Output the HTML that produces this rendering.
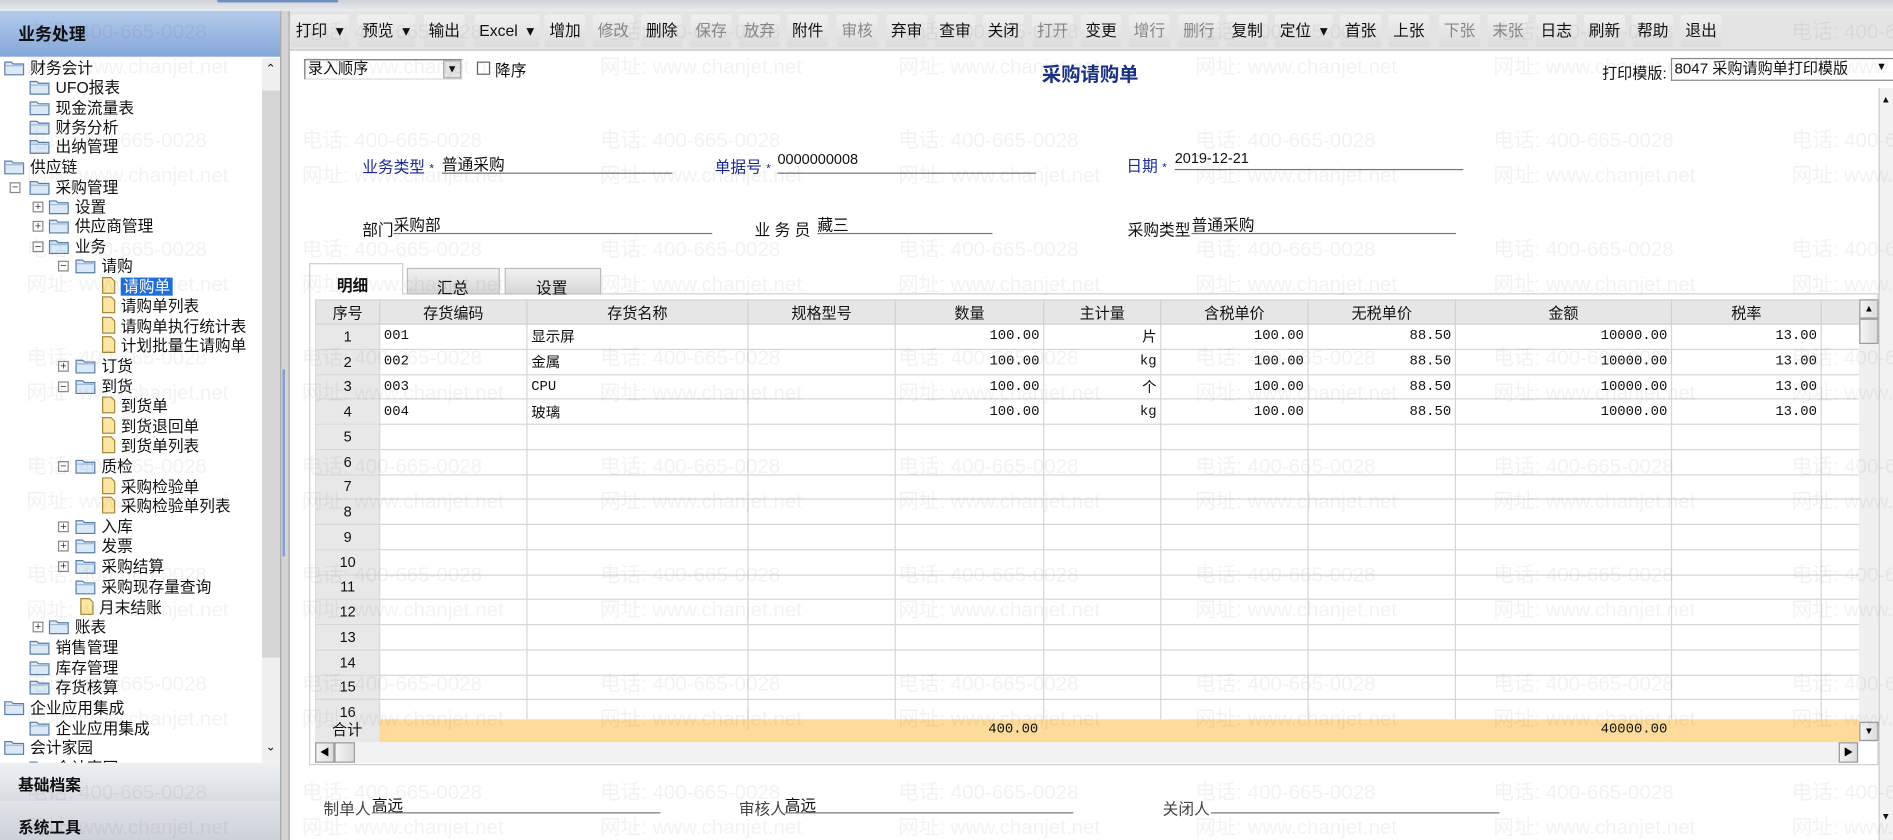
<!DOCTYPE html>
<html><head><meta charset="utf-8">
<style>
*{margin:0;padding:0;box-sizing:border-box}
html,body{width:1893px;height:840px;overflow:hidden;background:#fff}
body{font-family:"Liberation Sans","Noto Sans CJK SC",sans-serif;font-size:13px;color:#111}
#w{position:absolute;left:0;top:0;width:1568px;height:696px;transform:scale(1.2073,1.2069);transform-origin:0 0;overflow:hidden;background:#fff}
.a{position:absolute;white-space:nowrap}
.tb{position:absolute;top:12px;height:27px;line-height:27px;background:linear-gradient(#f0f0f0,#dcdcdc);border-radius:2px;padding:0 4px;font-size:13px}
.g{color:#888}
.ti{position:absolute;height:17px;line-height:17px;font-size:13px;white-space:nowrap}
.ti svg{vertical-align:-2px;margin-right:4px}
.box{position:absolute;width:9px;height:9px;border:1px solid #888;background:#fff;font-size:9px;line-height:7px;text-align:center;color:#333}
.wm{position:absolute;color:rgba(0,0,0,0.05);font-size:17px;white-space:nowrap;font-family:"Liberation Sans","Noto Sans CJK SC",sans-serif}
table{border-collapse:collapse;table-layout:fixed}
td{border:1px solid #d6d6d6;height:20.75px;font-size:12px;padding:0 3px;white-space:nowrap;overflow:hidden}
th{background:#e6e6e6;border:1px solid #d0d0d0;font-weight:normal;height:20px;font-size:12.5px}
td.n{background:#e8e8e8;text-align:center}
td.r{text-align:right;font-family:"Liberation Mono","Noto Sans CJK SC",monospace;font-size:11.5px}
td.m{font-family:"Liberation Mono","Noto Sans CJK SC",monospace;font-size:11.5px}
.ln{position:absolute;height:1px;background:#777}
.lbl{position:absolute;font-size:13px;white-space:nowrap}
.sb{position:absolute;background:linear-gradient(90deg,#f4f4f4,#dcdcdc);border:1px solid #999;font-size:8px;text-align:center;color:#000}
</style></head><body>
<div id="w">
<div class="a" style="left:0;top:0;width:1568px;height:9px;background:linear-gradient(#cfd3d8,#e9ebee)"></div>
<div class="a" style="left:180px;top:0;width:100px;height:2px;background:#6f8fc0"></div>
<div class="a" style="left:0;top:9px;width:232px;height:38px;background:linear-gradient(#b4cbec,#84a7d8)"></div>
<div class="a" style="left:15px;top:18px;font-size:14px;font-weight:bold">业务处理</div>
<div class="a" style="left:217px;top:48px;width:15px;height:584px;background:#f0f0f0"></div>
<div class="a" style="left:217px;top:75px;width:15px;height:470px;background:#d6d6d6"></div>
<div class="a" style="left:220px;top:52px;font-size:10px">&#8963;</div>
<div class="a" style="left:220px;top:614px;font-size:10px">&#8964;</div>
<div id="tree" class="a" style="left:0;top:0;width:217px;height:632px;overflow:hidden"></div>
<div class="a" style="left:0;top:632px;width:232px;height:32px;background:linear-gradient(#eef0f3,#d8dce2)"></div>
<div class="a" style="left:15px;top:640px;font-size:13px;font-weight:bold">基础档案</div>
<div class="a" style="left:0;top:664px;width:232px;height:32px;background:linear-gradient(#e0e3e8,#cdd2d9)"></div>
<div class="a" style="left:15px;top:675px;font-size:13px;font-weight:bold">系统工具</div>
<div class="a" style="left:232px;top:9px;width:8px;height:687px;background:#d4d4d4;border-left:1px solid #aaa;border-right:1px solid #aaa"></div>
<div class="a" style="left:234px;top:306px;width:2px;height:155px;background:#7f9fd6"></div>
<div class="a" style="left:240px;top:9px;width:1328px;height:33px;background:#e4e4e4;border-bottom:1px solid #c8c8c8"></div>
<div class="tb" style="left:241px">打印 &nbsp;▾</div>
<div class="tb" style="left:296px">预览 &nbsp;▾</div>
<div class="tb" style="left:351px">输出</div>
<div class="tb" style="left:393px">Excel &nbsp;▾</div>
<div class="tb" style="left:451px">增加</div>
<div class="tb g" style="left:491px">修改</div>
<div class="tb" style="left:531px">删除</div>
<div class="tb g" style="left:572px">保存</div>
<div class="tb g" style="left:612px">放弃</div>
<div class="tb" style="left:652px">附件</div>
<div class="tb g" style="left:693px">审核</div>
<div class="tb" style="left:734px">弃审</div>
<div class="tb" style="left:774px">查审</div>
<div class="tb" style="left:814px">关闭</div>
<div class="tb g" style="left:855px">打开</div>
<div class="tb" style="left:895px">变更</div>
<div class="tb g" style="left:935px">增行</div>
<div class="tb g" style="left:976px">删行</div>
<div class="tb" style="left:1016px">复制</div>
<div class="tb" style="left:1056px">定位 &nbsp;▾</div>
<div class="tb" style="left:1110px">首张</div>
<div class="tb" style="left:1150px">上张</div>
<div class="tb g" style="left:1192px">下张</div>
<div class="tb g" style="left:1232px">末张</div>
<div class="tb" style="left:1272px">日志</div>
<div class="tb" style="left:1312px">刷新</div>
<div class="tb" style="left:1352px">帮助</div>
<div class="tb" style="left:1392px">退出</div>
<div class="a" style="left:252px;top:49px;width:131px;height:17px;border:1px solid #777;border-right-color:#ddd;border-bottom-color:#ddd;font-size:12.5px;line-height:15px;padding-left:2px">录入顺序</div>
<div class="a" style="left:367px;top:50px;width:15px;height:15px;background:#e4e4e4;border:1px solid #aaa;font-size:9px;text-align:center;line-height:13px">▼</div>
<div class="a" style="left:395px;top:51px;width:11px;height:11px;border:1px solid #666;background:#fff"></div>
<div class="a" style="left:410px;top:48px;font-size:13px">降序</div>
<div class="a" style="left:863px;top:48px;font-size:16px;font-weight:bold;color:#1a3080">采购请购单</div>
<div class="a" style="left:1327px;top:50px;font-size:12.5px">打印模版:</div>
<div class="a" style="left:1384px;top:48px;width:184px;height:19px;border:1px solid #888;border-right:0;font-size:12.5px;line-height:17px;padding-left:2px">8047 采购请购单打印模版</div>
<div class="a" style="left:1554px;top:50px;font-size:9px">▼</div>
<div class="a" style="left:1556px;top:73px;width:12px;height:623px;background:#f2f2f2;border-left:1px solid #ccc"></div>
<div class="a" style="left:1558px;top:78px;font-size:8px">▲</div>
<div class="a" style="left:1558px;top:672px;font-size:8px">▼</div>
<div class="lbl" style="left:300px;top:128px;color:#1a2a90">业务类型 <span style="font-size:10px">*</span></div>
<div class="lbl" style="left:366px;top:126px">普通采购</div>
<div class="ln" style="left:366px;top:143px;width:191px"></div>
<div class="lbl" style="left:592px;top:128px;color:#1a2a90">单据号 <span style="font-size:10px">*</span></div>
<div class="lbl" style="left:644px;top:125px;font-size:12px">0000000008</div>
<div class="ln" style="left:644px;top:143px;width:214px"></div>
<div class="lbl" style="left:933px;top:127px;color:#1a2a90">日期 <span style="font-size:10px">*</span></div>
<div class="lbl" style="left:973px;top:124px;font-size:12px">2019-12-21</div>
<div class="ln" style="left:973px;top:140px;width:239px"></div>
<div class="lbl" style="left:300px;top:180px">部门</div>
<div class="lbl" style="left:326px;top:176px">采购部</div>
<div class="ln" style="left:326px;top:193px;width:264px"></div>
<div class="lbl" style="left:625px;top:180px">业 务 员</div>
<div class="lbl" style="left:677px;top:176px">藏三</div>
<div class="ln" style="left:677px;top:193px;width:145px"></div>
<div class="lbl" style="left:934px;top:180px">采购类型</div>
<div class="lbl" style="left:987px;top:176px">普通采购</div>
<div class="ln" style="left:987px;top:193px;width:219px"></div>
<div class="a" style="left:256px;top:243px;width:1300px;height:391px;border:1px solid #cfcfcf;background:#fff"></div>
<div class="a" style="left:256px;top:218px;width:78px;height:26px;background:#fff;border:1px solid #ccc;border-bottom:0;font-weight:bold;font-size:13px;padding:7px 0 0 22px">明细</div>
<div class="a" style="left:337px;top:222px;width:77px;height:22px;background:linear-gradient(#f2f2f2,#d6d6d6);border:1px solid #bbb;font-size:13px;padding:5px 0 0 24px">汇总</div>
<div class="a" style="left:418px;top:222px;width:80px;height:22px;background:linear-gradient(#f2f2f2,#d6d6d6);border:1px solid #bbb;font-size:13px;padding:5px 0 0 25px">设置</div>
<div class="a" style="left:261px;top:248px;width:1279px;height:348px;overflow:hidden">
<table style="width:1279px">
<colgroup><col style="width:53px"><col style="width:122px"><col style="width:183px"><col style="width:122px"><col style="width:123px"><col style="width:97px"><col style="width:122px"><col style="width:122px"><col style="width:179px"><col style="width:124px"><col style="width:32px"></colgroup>
<tr><th>序号</th><th>存货编码</th><th>存货名称</th><th>规格型号</th><th>数量</th><th>主计量</th><th>含税单价</th><th>无税单价</th><th>金额</th><th>税率</th><th></th></tr>
<tr><td class="n">1</td><td class="m">001</td><td>显示屏</td><td></td><td class="r">100.00</td><td style="text-align:right">片</td><td class="r">100.00</td><td class="r">88.50</td><td class="r">10000.00</td><td class="r">13.00</td><td></td></tr>
<tr><td class="n">2</td><td class="m">002</td><td>金属</td><td></td><td class="r">100.00</td><td class="r">kg</td><td class="r">100.00</td><td class="r">88.50</td><td class="r">10000.00</td><td class="r">13.00</td><td></td></tr>
<tr><td class="n">3</td><td class="m">003</td><td class="m">CPU</td><td></td><td class="r">100.00</td><td style="text-align:right">个</td><td class="r">100.00</td><td class="r">88.50</td><td class="r">10000.00</td><td class="r">13.00</td><td></td></tr>
<tr><td class="n">4</td><td class="m">004</td><td>玻璃</td><td></td><td class="r">100.00</td><td class="r">kg</td><td class="r">100.00</td><td class="r">88.50</td><td class="r">10000.00</td><td class="r">13.00</td><td></td></tr>
<tr><td class="n">5</td><td></td><td></td><td></td><td></td><td></td><td></td><td></td><td></td><td></td><td></td></tr>
<tr><td class="n">6</td><td></td><td></td><td></td><td></td><td></td><td></td><td></td><td></td><td></td><td></td></tr>
<tr><td class="n">7</td><td></td><td></td><td></td><td></td><td></td><td></td><td></td><td></td><td></td><td></td></tr>
<tr><td class="n">8</td><td></td><td></td><td></td><td></td><td></td><td></td><td></td><td></td><td></td><td></td></tr>
<tr><td class="n">9</td><td></td><td></td><td></td><td></td><td></td><td></td><td></td><td></td><td></td><td></td></tr>
<tr><td class="n">10</td><td></td><td></td><td></td><td></td><td></td><td></td><td></td><td></td><td></td><td></td></tr>
<tr><td class="n">11</td><td></td><td></td><td></td><td></td><td></td><td></td><td></td><td></td><td></td><td></td></tr>
<tr><td class="n">12</td><td></td><td></td><td></td><td></td><td></td><td></td><td></td><td></td><td></td><td></td></tr>
<tr><td class="n">13</td><td></td><td></td><td></td><td></td><td></td><td></td><td></td><td></td><td></td><td></td></tr>
<tr><td class="n">14</td><td></td><td></td><td></td><td></td><td></td><td></td><td></td><td></td><td></td><td></td></tr>
<tr><td class="n">15</td><td></td><td></td><td></td><td></td><td></td><td></td><td></td><td></td><td></td><td></td></tr>
<tr><td class="n">16</td><td></td><td></td><td></td><td></td><td></td><td></td><td></td><td></td><td></td><td></td></tr>
</table></div>
<div class="a" style="left:261px;top:596px;width:53px;height:19px;background:#e8e8e8;text-align:center;font-size:12.5px;line-height:19px">合计</div>
<div class="a" style="left:314px;top:596px;width:1226px;height:19px;background:#fddb9a"></div>
<div class="a" style="left:741px;top:598px;width:119px;text-align:right;font-family:'Liberation Mono',monospace;font-size:11.5px">400.00</div>
<div class="a" style="left:1205px;top:598px;width:176px;text-align:right;font-family:'Liberation Mono',monospace;font-size:11.5px">40000.00</div>
<div class="a" style="left:1540px;top:248px;width:16px;height:367px;background:#f0f0f0"></div>
<div class="sb" style="left:1540px;top:248px;width:16px;height:16px;line-height:14px">▲</div>
<div class="sb" style="left:1540px;top:264px;width:16px;height:21px"></div>
<div class="sb" style="left:1540px;top:598px;width:16px;height:16px;line-height:14px">▼</div>
<div class="a" style="left:261px;top:615px;width:1279px;height:17px;background:#f2f2f2"></div>
<div class="sb" style="left:261px;top:615px;width:16px;height:17px;line-height:15px">◀</div>
<div class="sb" style="left:277px;top:615px;width:17px;height:17px"></div>
<div class="sb" style="left:1523px;top:615px;width:16px;height:17px;line-height:15px">▶</div>
<div class="lbl" style="left:268px;top:660px;color:#444">制单人</div>
<div class="lbl" style="left:308px;top:657px">高远</div>
<div class="ln" style="left:308px;top:673px;width:239px"></div>
<div class="lbl" style="left:612px;top:660px;color:#444">审核人</div>
<div class="lbl" style="left:650px;top:657px">高远</div>
<div class="ln" style="left:650px;top:673px;width:239px"></div>
<div class="lbl" style="left:963px;top:660px;color:#444">关闭人</div>
<div class="ln" style="left:1003px;top:673px;width:239px"></div>
<div id="wm"></div>
</div>
<script>
var F='<svg width="18" height="14" viewBox="0 0 18 14"><path d="M1 2.5h5.5l1.5 1.5h8.5v9H1z" fill="#dbe9f7" stroke="#5b7ea6"/><path d="M1.5 5.5h15" stroke="#9bb8d8"/></svg>';
var L='<svg width="12" height="15" viewBox="0 0 12 15"><path d="M1 1h7l3 3v10H1z" fill="#fbe6a4" stroke="#a8893a"/></svg>';
var T=[
[56,3,0,'财务会计'],[72,24,0,'UFO报表'],[89,24,0,'现金流量表'],[105,24,0,'财务分析'],[121,24,0,'出纳管理'],
[138,3,0,'供应链'],[155,24,0,'采购管理','-',8],[171,40,0,'设置','+',27],[187,40,0,'供应商管理','+',27],[204,40,0,'业务','-',27],
[220,62,0,'请购','-',48],[237,84,1,'请购单'],[253,84,1,'请购单列表'],[270,84,1,'请购单执行统计表'],[286,84,1,'计划批量生请购单'],
[303,62,0,'订货','+',48],[320,62,0,'到货','-',48],[336,84,1,'到货单'],[353,84,1,'到货退回单'],[369,84,1,'到货单列表'],
[386,62,0,'质检','-',48],[403,84,1,'采购检验单'],[419,84,1,'采购检验单列表'],[436,62,0,'入库','+',48],[452,62,0,'发票','+',48],
[469,62,0,'采购结算','+',48],[486,62,0,'采购现存量查询'],[503,66,1,'月末结账'],[519,40,0,'账表','+',27],
[536,24,0,'销售管理'],[553,24,0,'库存管理'],[569,24,0,'存货核算'],[586,3,0,'企业应用集成'],[603,24,0,'企业应用集成'],[619,3,0,'会计家园'],[636,24,0,'会计家园']];
var h='';
T.forEach(function(t){
 var y=t[0]-8;
 if(t[4]) h+='<div class="box" style="left:'+t[5]+'px;top:'+(y+4)+'px">'+(t[4]=='+'?'+':'&minus;')+'</div>';
 var txt=t[3]; if(t[0]==237) txt='<span style="background:#1f6fd8;color:#fff;padding:0 2px">请购单</span>';
 h+='<div class="ti" style="left:'+t[1]+'px;top:'+y+'px">'+(t[2]?L:F)+txt+'</div>';
});
document.getElementById('tree').innerHTML=h;
var w='',xs=[22,250,497,744,990,1237,1484],ys=[20,110,200,290,380,470,560,650];
ys.forEach(function(y){xs.forEach(function(x){w+='<div class="wm" style="left:'+x+'px;top:'+(y-8)+'px">电话: 400-665-0028</div><div class="wm" style="left:'+x+'px;top:'+(y+21)+'px">网址: www.chanjet.net</div>';});});
document.getElementById('wm').innerHTML=w;
</script>
</body></html>
